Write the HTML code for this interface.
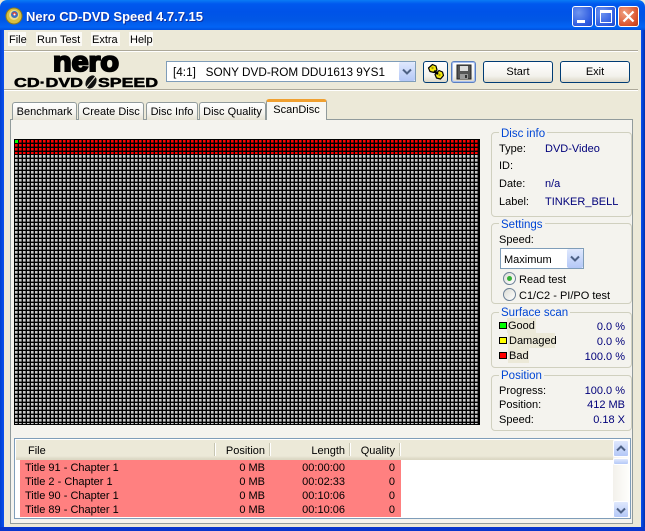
<!DOCTYPE html>
<html><head><meta charset="utf-8"><style>
html,body{margin:0;padding:0;background:#fff}
#w{position:relative;width:645px;height:531px;overflow:hidden;font:11px/16px "Liberation Sans",sans-serif;color:#000;background:#ece9d8}
#w div,#w span.a{position:absolute;white-space:nowrap;box-sizing:border-box}
.v{color:#00007a}.r{text-align:right}
.leg{color:#0046d5;background:#f4f3ee;padding:0 2px;height:14px;line-height:16px;font-size:11.5px}
.grp{border:1px solid #d0d0bf;border-radius:4px}
.tab{top:102px;height:18px;background:linear-gradient(#fff,#f4f3ee 60%,#e4e1d2);border:1px solid #919b9c;border-bottom:0;border-radius:3px 3px 0 0;text-align:center;line-height:18px}
.btn{top:61px;height:22px;border:1px solid #003c74;border-radius:3px;background:linear-gradient(#fff,#f3f2ec 70%,#dcd8c8);text-align:center;line-height:20px}
.cb{width:16px;border-radius:2px;background:linear-gradient(#dfe8fd,#b4c8f7);}
.m{top:32px;height:14px;background:#fbfaf6;line-height:16px}
.rad{width:13px;height:13px;border:1px solid #6e8298;border-radius:50%;background:linear-gradient(135deg,#dcdcd4,#fff)}
.sq{width:8px;height:7px;border:1px solid #000}
.lab{background:#ece9d8;height:15px;line-height:16px;padding:0 1px}
.wb{top:6px;width:21px;height:21px;border:1px solid #fff;border-radius:3px}
.cells{background-image:linear-gradient(90deg,transparent 2px,rgba(0,0,0,.4) 2px,rgba(0,0,0,.4) 3px,#000 3px),linear-gradient(180deg,transparent 2px,rgba(0,0,0,.4) 2px,rgba(0,0,0,.4) 3px,#000 3px);background-size:4px 4px}
</style></head><body><div id="w">
<!-- frame -->
<div style="left:0;top:0;width:645px;height:30px;border-radius:7px 7px 0 0;background:linear-gradient(#0a7cf5 0,#0058ee 4px,#0053e8 12px,#0157e6 20px,#0264f5 27px,#0150de 30px)"></div>
<div style="left:0;top:30px;width:4px;height:501px;background:linear-gradient(90deg,#0040d0,#0a50f0)"></div>
<div style="left:641px;top:30px;width:4px;height:501px;background:linear-gradient(90deg,#0a50f0,#0030b0)"></div>
<div style="left:0;top:527px;width:645px;height:4px;background:#0836cc"></div>
<!-- title icon -->
<svg style="position:absolute;left:5px;top:7px" width="18" height="18" viewBox="0 0 18 18"><circle cx="9" cy="9" r="8" fill="#d8c040" stroke="#8a7a20" stroke-width="1"/><circle cx="9" cy="8" r="5" fill="#e8dc90"/><circle cx="9.500" cy="7.500" r="3.500" fill="#3a70c0"/><path d="M7 6l3-1 2 2-3 2z" fill="#e04030"/><circle cx="9.500" cy="7.500" r="1" fill="#fff"/></svg>
<div style="left:26px;top:9px;color:#fff;font:bold 13px/15px 'Liberation Sans',sans-serif;text-shadow:1px 1px 0 #0f2f9f">Nero CD-DVD Speed 4.7.7.15</div>
<!-- window buttons -->
<div class="wb" style="left:572px;background:radial-gradient(circle at 30% 30%,#6f95f0,#2d5be0 70%,#2048c8)"><div style="left:4px;top:13px;width:8px;height:3px;background:#fff"></div></div>
<div class="wb" style="left:595px;background:radial-gradient(circle at 30% 30%,#6f95f0,#2d5be0 70%,#2048c8)"><div style="left:4px;top:3px;width:12px;height:13px;border:1px solid #fff;border-top:3px solid #fff"></div></div>
<div class="wb" style="left:618px;background:radial-gradient(circle at 30% 30%,#f0a080,#d9512c 70%,#b83a18)"><svg style="position:absolute;left:3px;top:3px" width="13" height="13"><path d="M1.500 1.500L11.500 11.500M11.500 1.500L1.500 11.500" stroke="#fff" stroke-width="2.200"/></svg></div>
<!-- menu -->
<div class="m" style="left:8px;width:18px;padding-left:1px">File</div>
<div class="m" style="left:36px;width:46px;padding-left:1px">Run Test</div>
<div class="m" style="left:91px;width:29px;padding-left:1px">Extra</div>
<div class="m" style="left:129px;width:24px;padding-left:1px">Help</div>
<div style="left:4px;top:50px;width:634px;height:2px;background:linear-gradient(#aca899 50%,#fff 50%)"></div>
<div style="left:4px;top:89px;width:634px;height:2px;background:linear-gradient(#aca899 50%,#fff 50%)"></div>
<!-- logo -->
<svg style="position:absolute;left:12px;top:50px" width="150" height="40"><text x="41" y="21" font-family="Liberation Sans" font-weight="bold" font-size="28" textLength="66" lengthAdjust="spacingAndGlyphs" stroke="#000" stroke-width="2">nero</text><text x="2" y="37" font-family="Liberation Sans" font-weight="bold" font-size="12.500" textLength="69" lengthAdjust="spacingAndGlyphs" stroke="#000" stroke-width=".5">CD·DVD</text><ellipse cx="79" cy="32" rx="5" ry="7" transform="rotate(30 79 32)" fill="#111"/><path d="M74 38L84 26" stroke="#ece9d8" stroke-width="1"/><text x="86" y="37" font-family="Liberation Sans" font-weight="bold" font-size="12.500" textLength="60" lengthAdjust="spacingAndGlyphs" stroke="#000" stroke-width=".5">SPEED</text></svg>
<!-- combo -->
<div style="left:166px;top:61px;width:250px;height:21px;background:#fff;border:1px solid #7f9db9"></div>
<div style="left:173px;top:65px;font-size:11.750px">[4:1]&nbsp;&nbsp; SONY DVD-ROM DDU1613 9YS1</div>
<div class="cb" style="left:399px;top:62px;height:19px"><svg style="position:absolute;left:3px;top:6px" width="10" height="8"><path d="M1 1.500L5 5.500L9 1.500" fill="none" stroke="#4d6185" stroke-width="2"/></svg></div>
<!-- tool buttons -->
<div class="btn" style="left:423px;width:25px"><svg style="position:absolute;left:3px;top:1px" width="18" height="18"><path d="M5.500 1.500L9 3 10 7 7 9.500 3 8.500 1.500 5zM12 7.500L15.500 9 16.500 12.500 13.500 16 9.500 15 8 11.500z" fill="#f4ea10" stroke="#000" stroke-width="1.200" stroke-linejoin="round"/><path d="M7 8L11 11" stroke="#000" stroke-width="2.500"/><circle cx="5.500" cy="5" r="1.200" fill="#a89a00"/><circle cx="12.500" cy="12" r="1.200" fill="#a89a00"/></svg></div>
<div class="btn" style="left:451px;width:25px;border-color:#5a7fc0;box-shadow:inset 0 0 0 1px #a8c0f0"><svg style="position:absolute;left:4px;top:2px" width="16" height="16"><rect x="1" y="1" width="14" height="14" fill="#555" stroke="#222"/><rect x="4" y="2" width="8" height="5" fill="#ddd"/><rect x="4" y="10" width="8" height="5" fill="#999"/><rect x="9" y="11" width="2" height="3" fill="#333"/></svg></div>
<div class="btn" style="left:483px;width:70px">Start</div>
<div class="btn" style="left:560px;width:70px">Exit</div>
<!-- panel -->
<div style="left:10px;top:119px;width:623px;height:405px;background:#f4f3ee;border:1px solid #919b9c"></div>
<div class="tab" style="left:12px;width:65px">Benchmark</div>
<div class="tab" style="left:78px;width:66px">Create Disc</div>
<div class="tab" style="left:146px;width:52px">Disc Info</div>
<div class="tab" style="left:199px;width:67px">Disc Quality</div>
<div class="tab" style="left:266px;top:99px;width:61px;height:21px;background:#f8f7f2;border-top:3px solid #f0a030;line-height:17px;border-bottom:0">ScanDisc</div>
<!-- grid -->
<div style="left:14px;top:139px;width:466px;height:286px;background-color:#000"></div>
<div class="cells" style="left:15px;top:140px;width:464px;height:14px;background-color:#f00"></div>
<div class="cells" style="left:15px;top:155px;width:464px;height:269px;background-color:#c8c8c8"></div>
<div style="left:15px;top:140px;width:3px;height:3px;background:#0f0"></div>
<!-- disc info -->
<div class="grp" style="left:491px;top:132px;width:141px;height:85px"></div>
<div class="leg" style="left:499px;top:126px">Disc info</div>
<div style="left:499px;top:141px">Type:</div><div class="v" style="left:545px;top:141px">DVD-Video</div>
<div style="left:499px;top:158px">ID:</div>
<div style="left:499px;top:176px">Date:</div><div class="v" style="left:545px;top:176px">n/a</div>
<div style="left:499px;top:194px">Label:</div><div class="v" style="left:545px;top:194px">TINKER_BELL</div>
<!-- settings -->
<div class="grp" style="left:491px;top:223px;width:141px;height:81px"></div>
<div class="leg" style="left:499px;top:217px">Settings</div>
<div style="left:499px;top:232px">Speed:</div>
<div style="left:500px;top:248px;width:84px;height:21px;background:#fff;border:1px solid #7f9db9"></div>
<div style="left:504px;top:252px">Maximum</div>
<div class="cb" style="left:567px;top:249px;height:19px"><svg style="position:absolute;left:3px;top:6px" width="10" height="8"><path d="M1 1.500L5 5.500L9 1.500" fill="none" stroke="#4d6185" stroke-width="2"/></svg></div>
<div class="rad" style="left:503px;top:272px"><div style="left:3px;top:3px;width:5px;height:5px;border-radius:50%;background:#35b035"></div></div>
<div style="left:519px;top:272px">Read test</div>
<div class="rad" style="left:503px;top:288px"></div>
<div style="left:519px;top:288px">C1/C2 - PI/PO test</div>
<!-- surface -->
<div class="grp" style="left:491px;top:312px;width:141px;height:56px"></div>
<div class="leg" style="left:499px;top:305px">Surface scan</div>
<div class="sq" style="left:499px;top:322px;background:#0f0"></div><div class="lab" style="left:507px;top:318px;width:29px">Good</div><div class="v r" style="left:565px;top:319px;width:60px">0.0 %</div>
<div class="sq" style="left:499px;top:337px;background:#ff0"></div><div class="lab" style="left:508px;top:333px;width:47px">Damaged</div><div class="v r" style="left:565px;top:334px;width:60px">0.0 %</div>
<div class="sq" style="left:499px;top:352px;background:#f00"></div><div class="lab" style="left:508px;top:348px;width:21px">Bad</div><div class="v r" style="left:565px;top:349px;width:60px">100.0 %</div>
<!-- position -->
<div class="grp" style="left:491px;top:375px;width:141px;height:56px"></div>
<div class="leg" style="left:499px;top:368px">Position</div>
<div style="left:499px;top:383px">Progress:</div><div class="v r" style="left:565px;top:383px;width:60px">100.0 %</div>
<div style="left:499px;top:397px">Position:</div><div class="v r" style="left:565px;top:397px;width:60px">412 MB</div>
<div style="left:499px;top:412px">Speed:</div><div class="v r" style="left:565px;top:412px;width:60px">0.18 X</div>
<!-- list -->
<div style="left:14px;top:438px;width:617px;height:81px;background:#fff;border:1px solid #7f9db9"></div>
<div style="left:16px;top:440px;width:597px;height:20px;background:linear-gradient(#ece9d8 16px,#dcd8c4 19px)"></div>
<div style="left:28px;top:443px">File</div>
<div class="r" style="left:215px;top:443px;width:50px">Position</div>
<div class="r" style="left:270px;top:443px;width:75px">Length</div>
<div class="r" style="left:350px;top:443px;width:45px">Quality</div>
<div style="left:214px;top:443px;width:2px;height:13px;background:linear-gradient(90deg,#c7c5b2 50%,#fff 50%)"></div>
<div style="left:269px;top:443px;width:2px;height:13px;background:linear-gradient(90deg,#c7c5b2 50%,#fff 50%)"></div>
<div style="left:349px;top:443px;width:2px;height:13px;background:linear-gradient(90deg,#c7c5b2 50%,#fff 50%)"></div>
<div style="left:399px;top:443px;width:2px;height:13px;background:linear-gradient(90deg,#c7c5b2 50%,#fff 50%)"></div>
<div style="left:20px;top:460px;width:381px;height:57px;background:#ff8080"></div>
<div style="left:25px;top:460px">Title 91 - Chapter 1</div><div class="r" style="left:215px;top:460px;width:50px">0 MB</div><div class="r" style="left:270px;top:460px;width:75px">00:00:00</div><div class="r" style="left:350px;top:460px;width:45px">0</div>
<div style="left:25px;top:474px">Title 2 - Chapter 1</div><div class="r" style="left:215px;top:474px;width:50px">0 MB</div><div class="r" style="left:270px;top:474px;width:75px">00:02:33</div><div class="r" style="left:350px;top:474px;width:45px">0</div>
<div style="left:25px;top:488px">Title 90 - Chapter 1</div><div class="r" style="left:215px;top:488px;width:50px">0 MB</div><div class="r" style="left:270px;top:488px;width:75px">00:10:06</div><div class="r" style="left:350px;top:488px;width:45px">0</div>
<div style="left:25px;top:502px">Title 89 - Chapter 1</div><div class="r" style="left:215px;top:502px;width:50px">0 MB</div><div class="r" style="left:270px;top:502px;width:75px">00:10:06</div><div class="r" style="left:350px;top:502px;width:45px">0</div>
<!-- scrollbar -->
<div style="left:613px;top:440px;width:16px;height:78px;background:linear-gradient(90deg,#f3f1ec,#fefefb)"></div>
<div class="cb" style="left:613px;top:440px;height:17px;border:1px solid #fff"><svg style="position:absolute;left:2px;top:4px" width="10" height="8"><path d="M1 5.500L5 1.500L9 5.500" fill="none" stroke="#4d6185" stroke-width="2"/></svg></div>
<div class="cb" style="left:613px;top:458px;height:7px;border:1px solid #fff"></div>
<div class="cb" style="left:613px;top:501px;height:17px;border:1px solid #fff"><svg style="position:absolute;left:2px;top:5px" width="10" height="8"><path d="M1 1.500L5 5.500L9 1.500" fill="none" stroke="#4d6185" stroke-width="2"/></svg></div>
</div></body></html>
